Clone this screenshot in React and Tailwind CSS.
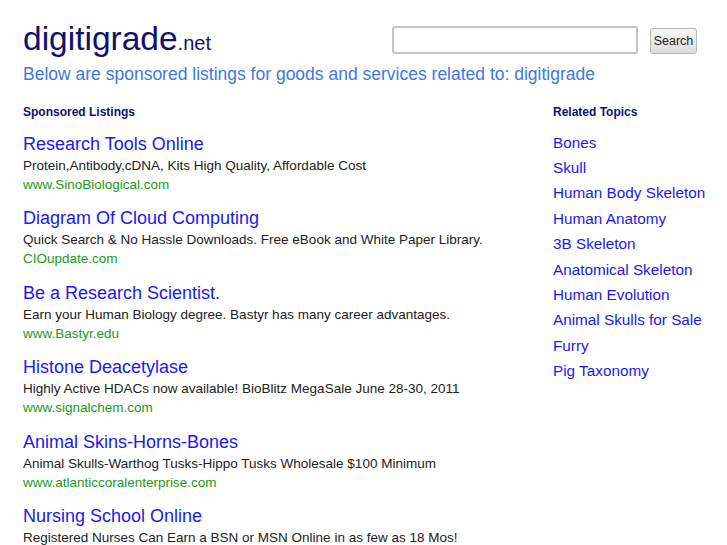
import React from "react";

const listings = [
  { title: "Research Tools Online", desc: "Protein,Antibody,cDNA, Kits High Quality, Affordable Cost", url: "www.SinoBiological.com" },
  { title: "Diagram Of Cloud Computing", desc: "Quick Search & No Hassle Downloads. Free eBook and White Paper Library.", url: "CIOupdate.com" },
  { title: "Be a Research Scientist.", desc: "Earn your Human Biology degree. Bastyr has many career advantages.", url: "www.Bastyr.edu" },
  { title: "Histone Deacetylase", desc: "Highly Active HDACs now available! BioBlitz MegaSale June 28-30, 2011", url: "www.signalchem.com" },
  { title: "Animal Skins-Horns-Bones", desc: "Animal Skulls-Warthog Tusks-Hippo Tusks Wholesale $100 Minimum", url: "www.atlanticcoralenterprise.com" },
  { title: "Nursing School Online", desc: "Registered Nurses Can Earn a BSN or MSN Online in as few as 18 Mos!", url: "www.nursing.com" },
];

const topics = [
  "Bones",
  "Skull",
  "Human Body Skeleton",
  "Human Anatomy",
  "3B Skeleton",
  "Anatomical Skeleton",
  "Human Evolution",
  "Animal Skulls for Sale",
  "Furry",
  "Pig Taxonomy",
];

export default function App() {
  return (
    <div className="h-[545px] overflow-hidden bg-white font-['Liberation_Sans',Arial,sans-serif]">
      <div className="px-[23px] pt-[22px]">
        {/* Header */}
        <div className="flex items-start justify-between">
          <div className="leading-none text-[#10106e]">
            <span className="text-[33.5px]">digitigrade</span>
            <span className="text-[20px]">.net</span>
          </div>
          <div className="mt-[3px] flex items-center gap-[12px] pr-[7px]">
            <input
              type="text"
              className="h-[28px] w-[246px] rounded-[3px] border-2 border-[#c4c4c4] bg-white outline-none"
            />
            <button className="mt-[3px] h-[26px] w-[47px] rounded-[3px] border border-[#b8b8b8] bg-gradient-to-b from-[#f6f6f6] to-[#dcdcdc] text-[12.5px] text-[#222]">
              Search
            </button>
          </div>
        </div>
        <div className="mt-[7px] whitespace-nowrap text-[17.5px] leading-[22px] text-[#3f78dd]">
          Below are sponsored listings for goods and services related to: digitigrade
        </div>

        {/* Body */}
        <div className="mt-[20px] flex">
          <div className="flex-1">
            <div className="text-[12px] font-bold leading-[14px] text-[#101070]">Sponsored Listings</div>
            <div className="mt-[15px] flex flex-col gap-[14.6px]">
              {listings.map((l) => (
                <div key={l.title}>
                  <div className="text-[18px] leading-[21px] text-[#1a1aee]">{l.title}</div>
                  <div className="mt-[2px] text-[13.5px] leading-[18px] text-[#222]">{l.desc}</div>
                  <div className="mt-[1px] text-[13.5px] leading-[18px] text-[#229922]">{l.url}</div>
                </div>
              ))}
            </div>
          </div>
          <div className="w-[151px] shrink-0">
            <div className="text-[12px] font-bold leading-[14px] text-[#101070]">Related Topics</div>
            <div className="mt-[11px] flex flex-col">
              {topics.map((t) => (
                <div key={t} className="whitespace-nowrap text-[15.3px] leading-[25.4px] text-[#1a1aee]">
                  {t}
                </div>
              ))}
            </div>
          </div>
        </div>
      </div>
    </div>
  );
}
